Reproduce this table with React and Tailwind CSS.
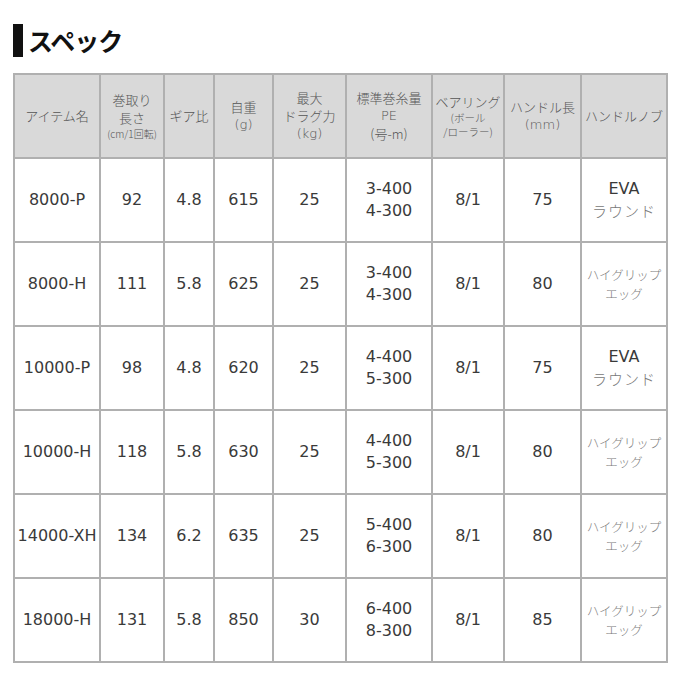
const cols = [86, 64, 50, 59, 73, 86, 72, 77, 86];

const rows = [
  ["8000-P", "92", "4.8", "615", "25", ["3-400", "4-300"], "8/1", "75", "eva"],
  ["8000-H", "111", "5.8", "625", "25", ["3-400", "4-300"], "8/1", "80", "egg"],
  ["10000-P", "98", "4.8", "620", "25", ["4-400", "5-300"], "8/1", "75", "eva"],
  ["10000-H", "118", "5.8", "630", "25", ["4-400", "5-300"], "8/1", "80", "egg"],
  ["14000-XH", "134", "6.2", "635", "25", ["5-400", "6-300"], "8/1", "80", "egg"],
  ["18000-H", "131", "5.8", "850", "30", ["6-400", "8-300"], "8/1", "85", "egg"],
];

const jp = { fontFamily: '"Noto Sans CJK JP", "DejaVu Sans", sans-serif' };
const num = { fontFamily: '"DejaVu Sans", "Noto Sans CJK JP", sans-serif' };

const Knob = ({ type }) =>
  type === "eva" ? (
    <div className="leading-[22px]">
      <div className="text-[16px] text-[#3a3a3a]" style={num}>EVA</div>
      <div className="text-[15px] text-[#777] font-light tracking-[1px]" style={jp}>ラウンド</div>
    </div>
  ) : (
    <div className="leading-[19px] text-[12.5px] text-[#7a7a7a] font-light" style={jp}>
      <div>ハイグリップ</div>
      <div>エッグ</div>
    </div>
  );

const th = "border-2 border-[#b0b0b0] bg-[#d9d9d9] text-[#555] font-light text-center align-middle p-0";
const td = "border-2 border-[#b0b0b0] text-center align-middle p-0 h-[84px]";

export default function App() {
  return (
    <div className="w-[680px] h-[680px] bg-white pt-[24px] pl-[13px]">
      <div className="flex items-center h-[33px]">
        <div className="w-[10px] h-[33px] bg-[#111]" />
        <h1 className="ml-[5px] text-[25px] font-bold text-[#111] tracking-[-1px]" style={jp}>
          スペック
        </h1>
      </div>
      <table className="mt-[16px] border-collapse table-fixed w-[653px]">
        <colgroup>
          {cols.map((w, i) => (
            <col key={i} style={{ width: w }} />
          ))}
        </colgroup>
        <thead>
          <tr className="h-[84px] text-[13px] leading-[18px]" style={jp}>
            <th className={th}>アイテム名</th>
            <th className={th}>
              <div>巻取り</div>
              <div>長さ</div>
              <div className="text-[10px] leading-[14px]">(cm/1回転)</div>
            </th>
            <th className={th}>ギア比</th>
            <th className={th}>
              <div>自重</div>
              <div style={num}>(g)</div>
            </th>
            <th className={th}>
              <div>最大</div>
              <div>ドラグ力</div>
              <div style={num}>(kg)</div>
            </th>
            <th className={th}>
              <div>標準巻糸量</div>
              <div style={num}>PE</div>
              <div>(号-m)</div>
            </th>
            <th className={th}>
              <div>ベアリング</div>
              <div className="text-[10.5px] leading-[14px]">(ボール</div>
              <div className="text-[10.5px] leading-[14px]">/ローラー)</div>
            </th>
            <th className={th}>
              <div>ハンドル長</div>
              <div style={num}>(mm)</div>
            </th>
            <th className={th}>ハンドルノブ</th>
          </tr>
        </thead>
        <tbody className="text-[16px] text-[#3a3a3a]" style={num}>
          {rows.map((r) => (
            <tr key={r[0]}>
              {r.slice(0, 5).map((c, i) => (
                <td key={i} className={td}>
                  {c}
                </td>
              ))}
              <td className={td}>
                <div className="leading-[22px]">
                  <div>{r[5][0]}</div>
                  <div>{r[5][1]}</div>
                </div>
              </td>
              <td className={td}>{r[6]}</td>
              <td className={td}>{r[7]}</td>
              <td className={td}>
                <Knob type={r[8]} />
              </td>
            </tr>
          ))}
        </tbody>
      </table>
    </div>
  );
}
